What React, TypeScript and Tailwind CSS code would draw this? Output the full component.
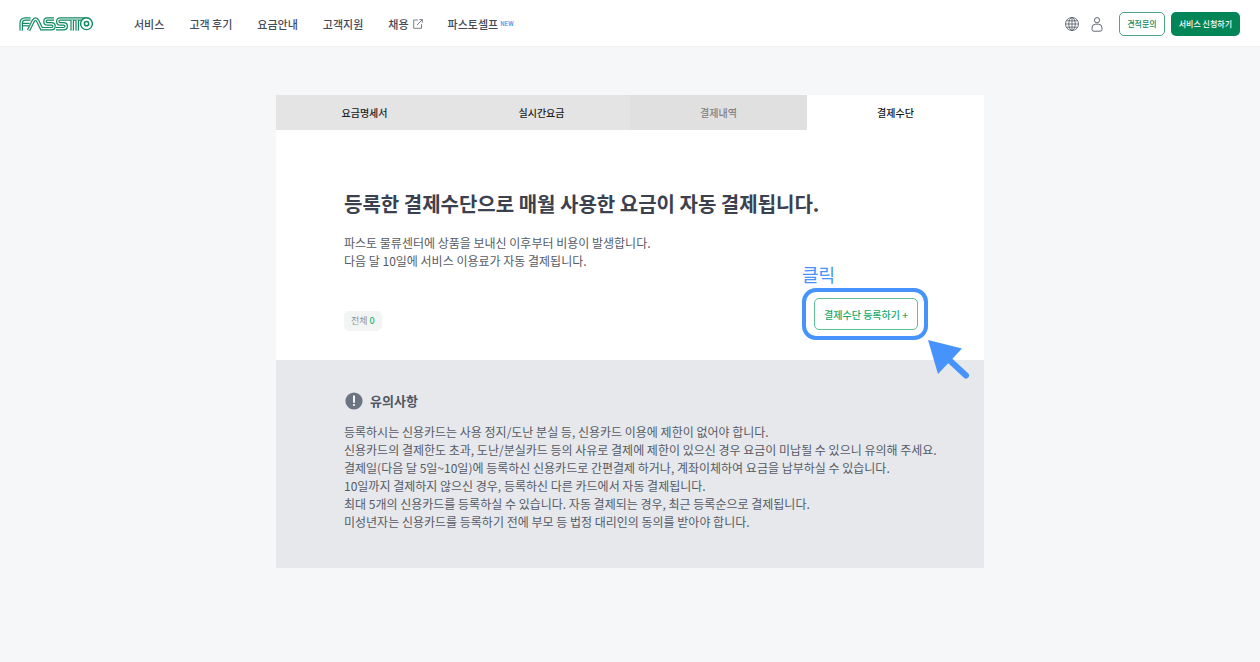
const navText = "text-[11px] leading-4 font-medium text-[#434a58]";

const tabs = [
  { label: "요금명세서", style: "bg-[#e4e4e4] text-[#222222]" },
  { label: "실시간요금", style: "bg-[#e4e4e4] text-[#222222]" },
  { label: "결제내역", style: "bg-[#e0e0e0] text-[#808080]" },
  { label: "결제수단", style: "bg-white text-[#111111]" },
];

const notices = [
  "등록하시는 신용카드는 사용 정지/도난 분실 등, 신용카드 이용에 제한이 없어야 합니다.",
  "신용카드의 결제한도 초과, 도난/분실카드 등의 사유로 결제에 제한이 있으신 경우 요금이 미납될 수 있으니 유의해 주세요.",
  "결제일(다음 달 5일~10일)에 등록하신 신용카드로 간편결제 하거나, 계좌이체하여 요금을 납부하실 수 있습니다.",
  "10일까지 결제하지 않으신 경우, 등록하신 다른 카드에서 자동 결제됩니다.",
  "최대 5개의 신용카드를 등록하실 수 있습니다. 자동 결제되는 경우, 최근 등록순으로 결제됩니다.",
  "미성년자는 신용카드를 등록하기 전에 부모 등 법정 대리인의 동의를 받아야 합니다.",
];

function LogoStrokes() {
  return (
    <>
      <path d="M2.200 14.500V7Q2.200 3 6.200 3H11.500" />
      <path d="M4 8.600H10.500" />
      <path d="M9.500 14.500L14.200 5Q16.500 1.200 18.800 5L22.500 12.700H32.500Q35 12.700 35 10.300T32.500 7.900H28.500Q26 7.900 26 5.400T28.500 3H35" />
      <path d="M37 12.700H44.500Q47.200 12.700 47.200 10.300T44.500 7.900H41.500Q38.800 7.900 38.800 5.400T41.500 3H66" />
      <path d="M53.200 4V14.500M58.200 4V14.500" />
    </>
  );
}

function Logo() {
  return (
    <svg viewBox="0 0 75 16" className="h-4 w-[75px]" fill="none" aria-hidden="true">
      <g stroke="#11895f" strokeWidth="3.6">
        <LogoStrokes />
      </g>
      <g stroke="#ffffff" strokeWidth="1.2">
        <LogoStrokes />
      </g>
      <circle cx="67.500" cy="7.700" r="5.900" fill="#ffffff" stroke="#11895f" strokeWidth="1.400" />
      <circle cx="67.500" cy="7.700" r="2.100" stroke="#11895f" strokeWidth="1.500" />
    </svg>
  );
}

function ExternalIcon() {
  return (
    <svg viewBox="0 0 10 10" className="size-[10px]" fill="none" stroke="#59606c" strokeWidth="0.8" aria-hidden="true">
      <path d="M5 1H0.700V9.300H8.500V5.200M6.300 0.600H9.400V3.700M9.300 0.700L4 6" />
    </svg>
  );
}

function GlobeIcon() {
  return (
    <svg viewBox="0 0 14 14" className="size-[14px]" fill="none" stroke="#4f5763" strokeWidth="0.8" aria-hidden="true">
      <circle cx="7" cy="7" r="6.500" />
      <ellipse cx="7" cy="7" rx="3.200" ry="6.500" />
      <path d="M7 0.500V13.500M0.500 7H13.500M1.400 3.800H12.600M1.400 10.200H12.600" />
    </svg>
  );
}

function UserIcon() {
  return (
    <svg viewBox="0 0 12 15" className="h-[15px] w-3" fill="none" stroke="#4f5763" strokeWidth="0.9" aria-hidden="true">
      <circle cx="6" cy="3.200" r="2.600" />
      <path d="M4.500 7.200H7.500Q11 7.200 11 11V12.500Q11 14.200 9.300 14.200H2.700Q1 14.200 1 12.500V11Q1 7.200 4.500 7.200Z" />
    </svg>
  );
}

export default function App() {
  return (
    <div className="min-h-screen bg-[#f6f7f9] font-['Noto_Sans_CJK_KR','Noto_Sans',sans-serif]">
      <header className="flex h-[47px] items-center border-b border-[#eff0f2] bg-white pt-0.5 pr-5 pl-[19px]">
        <a href="#home" aria-label="FASSTO">
          <Logo />
        </a>
        <nav className="ml-10 flex items-center gap-[25px]">
          <a href="#service" className={navText}>서비스</a>
          <a href="#reviews" className={navText}>고객 후기</a>
          <a href="#pricing" className={navText}>요금안내</a>
          <a href="#support" className={navText}>고객지원</a>
          <a href="#careers" className="flex items-center gap-1 text-[11px] leading-4 font-medium text-[#434a58]">
            채용
            <ExternalIcon />
          </a>
          <a href="#self" className="flex items-center gap-0.5 text-[11px] leading-4 font-medium text-[#434a58]">
            파스토셀프
            <span className="text-[6px] text-[#3d87f5]">NEW</span>
          </a>
        </nav>
        <div className="ml-auto flex items-center">
          <button type="button" aria-label="언어 선택">
            <GlobeIcon />
          </button>
          <button type="button" aria-label="내 계정" className="ml-3">
            <UserIcon />
          </button>
          <button type="button" className="ml-4 h-6 rounded-[5px] border border-[#4ba585] px-[7px] text-[8px] font-medium whitespace-nowrap text-[#11895f]">
            견적문의
          </button>
          <button type="button" className="ml-1.5 h-6 rounded-[5px] bg-[#048557] px-2 text-[8px] font-medium whitespace-nowrap text-white">
            서비스 신청하기
          </button>
        </div>
      </header>

      <main className="mx-auto mt-12 max-w-[708px]">
        <div role="tablist" className="grid grid-cols-4">
          {tabs.map((tab) => (
            <button
              key={tab.label}
              type="button"
              role="tab"
              aria-selected={tab.label === "결제수단"}
              className={`h-[35px] text-[10px] font-medium ${tab.style}`}
            >
              {tab.label}
            </button>
          ))}
        </div>

        <section className="bg-white px-[68px] pt-[58px] pb-[29px]">
          <h1 className="text-[20px] leading-8 font-bold text-[#3b414e]">
            등록한 결제수단으로 매월 사용한 요금이 자동 결제됩니다.
          </h1>
          <p className="mt-3.5 text-[12px] leading-[18px] text-[#555b66]">
            파스토 물류센터에 상품을 보내신 이후부터 비용이 발생합니다.
            <br />
            다음 달 10일에 서비스 이용료가 자동 결제됩니다.
          </p>
          <div className="mt-[27px] flex items-center justify-between">
            <p className="mt-3.5 flex h-5 items-center gap-0.5 rounded-[5px] bg-[#f3f5f5] px-[7px] text-[9px] text-[#8c929b]">
              전체 <span className="font-medium text-[#14b872]">0</span>
            </p>
            <div className="relative mr-[-2px]">
              <button type="button" className="h-8 w-[104px] rounded-[5px] border border-[#5cc294] bg-white text-[10px] font-medium whitespace-nowrap text-[#12a868]">
                결제수단 등록하기 +
              </button>
              <div className="pointer-events-none absolute -inset-y-2.5 -right-2.5 -left-3 rounded-[14px] border-4 border-[#4593fb]" />
              <span className="absolute bottom-full -left-3 mb-2.5 text-[18px] leading-7 whitespace-nowrap text-[#4593fb]">
                클릭
              </span>
              <svg viewBox="0 0 42 40" className="absolute top-[42px] left-[114px] h-10 w-[42px]" aria-hidden="true">
                <path d="M0 0L34 8.500L10 34Z" fill="#4593fb" />
                <path d="M18 17L38 35.500" stroke="#4593fb" strokeWidth="6" strokeLinecap="round" />
              </svg>
            </div>
          </div>
        </section>

        <section className="bg-[#e6e8ec] px-[68px] pt-[31px] pb-[37px]">
          <h2 className="flex items-center gap-1.5 text-[13px] leading-5 font-bold text-[#4f5763]">
            <svg viewBox="0 0 20 20" className="size-5" aria-hidden="true">
              <circle cx="10" cy="10" r="8.600" fill="#6b7480" />
              <path d="M10 5.200V11" stroke="#ffffff" strokeWidth="1.900" strokeLinecap="round" />
              <circle cx="10" cy="14" r="1.100" fill="#ffffff" />
            </svg>
            유의사항
          </h2>
          <div className="-mr-10 mt-3 text-[12px] leading-[18px] text-[#555b66]">
            {notices.map((notice) => (
              <p key={notice}>{notice}</p>
            ))}
          </div>
        </section>
      </main>
    </div>
  );
}
